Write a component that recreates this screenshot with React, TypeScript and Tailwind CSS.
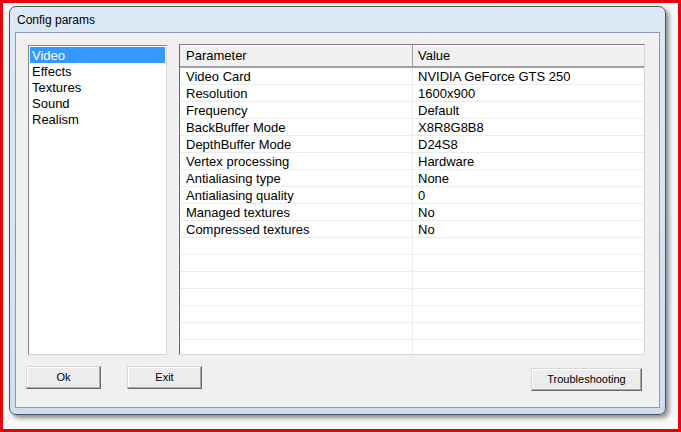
const sections = ['Video', 'Effects', 'Textures', 'Sound', 'Realism'];

const params: [string, string][] = [
  ['Video Card', 'NVIDIA GeForce GTS 250'],
  ['Resolution', '1600x900'],
  ['Frequency', 'Default'],
  ['BackBuffer Mode', 'X8R8G8B8'],
  ['DepthBuffer Mode', 'D24S8'],
  ['Vertex processing', 'Hardware'],
  ['Antialiasing type', 'None'],
  ['Antialiasing quality', '0'],
  ['Managed textures', 'No'],
  ['Compressed textures', 'No'],
];

const rows: [string, string][] = [...params, ...Array.from({ length: 7 }, () => ['', ''] as [string, string])];

function Button({ label, width }: { label: string; width: string }) {
  return (
    <button
      type="button"
      className={`${width} h-[23px] border border-t-[#d8d8d8] border-l-[#d8d8d8] border-b-[#6b6b6b] border-r-[#6b6b6b] bg-[#ececec] text-[11px] text-black shadow-[inset_-1px_-1px_0_#a8a8a8,inset_1px_1px_0_#ffffff]`}
    >
      {label}
    </button>
  );
}

export default function App() {
  return (
    <div className="h-[432px] w-[681px] border-[3px] border-[#e8000b] bg-[#fafafa] pl-[6px] pt-[3px] font-['Liberation_Sans',Arial,sans-serif]">
      <div className="flex h-[409px] w-[657px] flex-col rounded-[7px] border border-[#4a535e] bg-gradient-to-b from-[#dde9f6] to-[#cfdff1] px-[5px] pb-[6px] shadow-[3px_3px_5px_rgba(0,0,0,0.45)]">
        <div className="flex h-[25px] items-center pl-[2px] pt-[1px] text-[12px] text-black">Config params</div>

        <div className="flex flex-1 flex-col border border-[#8a9bb0] bg-[#f0f0f0] px-[12px] pt-[11px]">
          <div className="flex h-[311px] gap-[12px]">
            <div className="mt-[1px] h-[310px] w-[139px] border border-t-[#828282] border-l-[#828282] border-b-[#d4d4d4] border-r-[#d4d4d4] bg-white p-[1px] text-[13px]">
              {sections.map((s, i) => (
                <div
                  key={s}
                  className={`h-[16px] pl-[2px] pt-[1px] leading-[16px] ${i === 0 ? 'bg-[#3399ff] text-white' : 'text-black'}`}
                >
                  {s}
                </div>
              ))}
            </div>

            <div className="flex w-[466px] flex-col overflow-hidden border border-t-[#7c7c7c] border-l-[#6a6a6a] border-b-[#d8d8d8] border-r-[#d8d8d8] bg-white text-[13px] text-black">
              <div className="flex h-[23px] shrink-0 border-b-2 border-[#a0a0a0] bg-[#f0f0f0] shadow-[inset_0_1px_0_#ffffff]">
                <div className="w-[233px] border-r border-[#a0a0a0] pl-[6px] pt-[1px] leading-[20px]">Parameter</div>
                <div className="flex-1 pl-[5px] pt-[1px] leading-[20px]">Value</div>
              </div>
              {rows.map(([k, v], i) => (
                <div key={i} className="flex h-[17px] shrink-0 border-b border-[#ececec]">
                  <div className="w-[233px] border-r border-[#ececec] pl-[6px] pt-[1px] leading-[16px]">{k}</div>
                  <div className="flex-1 pl-[5px] pt-[1px] leading-[16px]">{v}</div>
                </div>
              ))}
            </div>
          </div>

          <div className="mt-[11px] flex">
            <div className="-ml-[2px] flex gap-[26px]">
              <Button label="Ok" width="w-[75px]" />
              <Button label="Exit" width="w-[75px]" />
            </div>
            <div className="ml-auto mr-[5px]">
              <Button label="Troubleshooting" width="w-[111px]" />
            </div>
          </div>
        </div>
      </div>
    </div>
  );
}
